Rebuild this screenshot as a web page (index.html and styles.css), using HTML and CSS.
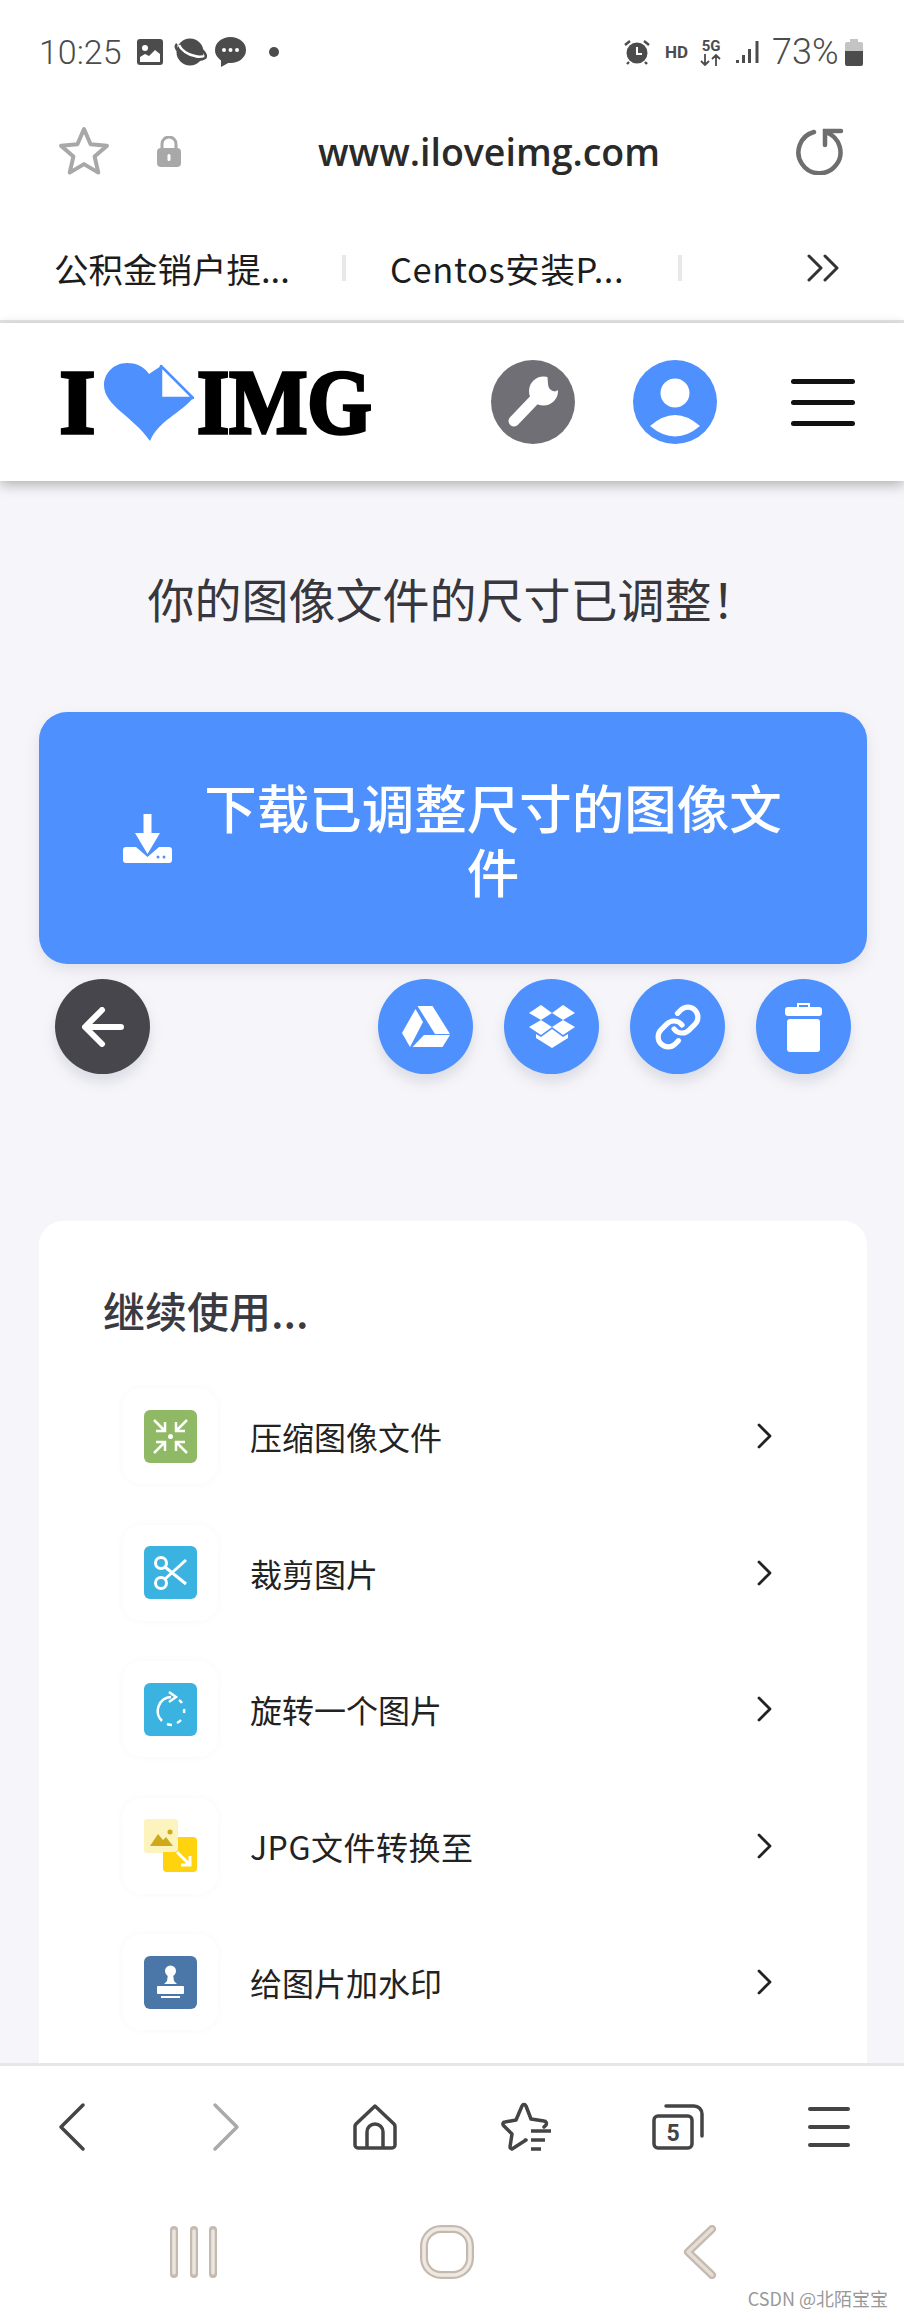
FILE: index.html
```html
<!DOCTYPE html>
<html lang="zh-CN">
<head>
<meta charset="UTF-8" />
<meta name="viewport" content="width=device-width, initial-scale=1" />
<title>iLoveIMG</title>
<link rel="stylesheet" href="styles.css">
</head>
<body>
<div class="phone">

  <div class="status">
    <span class="status-text clock">10:25</span>
    <svg class="st-image" width="26" height="26" viewBox="0 0 26 26"><rect width="26" height="26" rx="3" fill="#4c4c4c"/><circle cx="8" cy="9" r="3" fill="#fff"/><path d="M3 23v-5l5-3 4 2 6-6 5 4v8z" fill="#fff"/></svg>
    <svg class="st-planet" width="33" height="28" viewBox="0 0 33 28"><circle cx="16" cy="14" r="13.5" fill="#4c4c4c"/><path d="M3 6C0 9 3 13 9 17c8 5 18 6 22 3 2-2 0-5-3-8" fill="none" stroke="#4c4c4c" stroke-width="2.5"/><path d="M5 7c2 5 9 10 16 11 3 1 6 1 8 0" fill="none" stroke="#fff" stroke-width="2.5"/></svg>
    <svg class="st-chat" width="31" height="30" viewBox="0 0 31 30"><ellipse cx="15.5" cy="13" rx="15.5" ry="13" fill="#4c4c4c"/><path d="M6 22l0 8 9-5z" fill="#4c4c4c"/><circle cx="9" cy="13" r="2" fill="#fff"/><circle cx="15.5" cy="13" r="2" fill="#fff"/><circle cx="22" cy="13" r="2" fill="#fff"/></svg>
    <span class="st-dot"></span>

    <svg class="st-alarm" width="26" height="26" viewBox="0 0 26 26"><circle cx="13" cy="14" r="10.5" fill="#4c4c4c"/><path d="M1 6l5-4M25 6l-5-4M5 23l-2 2M21 23l2 2" stroke="#4c4c4c" stroke-width="2.4" fill="none"/><path d="M13 8v7h5" stroke="#fff" stroke-width="2" fill="none"/></svg>
    <span class="st-hd">HD</span>
    <span class="st-net">
      <span class="st-5g">5G</span>
      <svg width="22" height="12" viewBox="0 0 22 12"><path d="M5 0v11M1 7l4 4 4-4M16 12V1M12 5l4-4 4 4" stroke="#4c4c4c" stroke-width="1.8" fill="none"/></svg>
    </span>
    <svg class="st-signal" width="24" height="24" viewBox="0 0 24 24"><path d="M1.5 20v3M7.5 15v8M13.5 9v14M21 1v22" stroke="#4c4c4c" fill="none" stroke-width="3"/></svg>
    <span class="status-text st-percent">73%</span>
    <svg class="st-battery" width="18" height="27" viewBox="0 0 18 27"><path d="M5 0h8v3h3a2 2 0 0 1 2 2v7H0V5a2 2 0 0 1 2-2h3z" fill="#c4c4c4"/><path d="M0 12h18v13a2 2 0 0 1-2 2H2a2 2 0 0 1-2-2z" fill="#4c4c4c"/></svg>
  </div>

  <div class="urlbar">
    <svg class="url-star" width="52" height="50" viewBox="0 0 52 50"><path d="M26 3l6.6 15.2 16.4 1.5-12.4 10.8 3.7 16.1L26 38.100 11.700 46.600l3.700-16.100L3 19.700l16.400-1.500z" fill="none" stroke="#a8a8a8" stroke-width="4" stroke-linejoin="round"/></svg>
    <svg class="url-lock" width="24" height="31" viewBox="0 0 24 31"><path d="M5 13V8a7 7 0 0 1 14 0v5" fill="none" stroke="#a8a8a8" stroke-width="3"/><rect y="12" width="24" height="19" rx="4" fill="#a8a8a8"/><rect x="10.500" y="18" width="3" height="7" rx="1.500" fill="#fff"/></svg>
    <span class="url-text">www.iloveimg.com</span>
    <svg class="url-reload" width="48" height="48" viewBox="0 0 48 48"><path d="M18 5A21 21 0 1 0 30.500 5.500" fill="none" stroke="#6e6e6e" stroke-width="4.500" stroke-linecap="round"/><path d="M45 4H29V18" fill="none" stroke="#6e6e6e" stroke-width="4.500" stroke-linecap="round"/></svg>
  </div>

  <div class="tabs">
    <span class="tab tab-first">公积金销户提...</span>
    <span class="tab-sep"></span>
    <span class="tab tab-second">Centos安装P...</span>
    <span class="tab-sep"></span>
    <svg class="tab-more" width="34" height="28" viewBox="0 0 34 28"><path d="M3 2l12 12L3 26M19 2l12 12-12 12" fill="none" stroke="#333" stroke-width="3" stroke-linecap="round" stroke-linejoin="round"/></svg>
  </div>

  <header class="site-header">
    <div class="logo">
      <span class="logo-text logo-i">I</span>
      <svg class="logo-heart" width="90" height="80" viewBox="0 0 90 80"><path d="M45 13C40 5 31 2 23 2 9 2 0 13 0 24c0 21 29 31 46 56 8-20 31-28 43-43L57 5z" fill="#4d90fe"/><path d="M57 5v32h32z" fill="#fff" stroke="#4d90fe" stroke-width="2.500" stroke-linejoin="round"/></svg>
      <span class="logo-text logo-img">IMG</span>
    </div>
    <svg class="head-btn" width="84" height="84" viewBox="0 0 84 84"><circle cx="42" cy="42" r="42" fill="#6f6f75"/><path d="M23 61l22-23" stroke="#fff" stroke-width="11" stroke-linecap="round"/><circle cx="52.500" cy="31" r="14.500" fill="#fff"/><path d="M56 10l20 16-12 5.500q-6.500-.500-7-7.500z" fill="#6f6f75"/></svg>
    <svg class="head-btn head-user" width="84" height="84" viewBox="0 0 84 84"><circle cx="42" cy="42" r="42" fill="#4d90fe"/><circle cx="42" cy="33" r="14.500" fill="#fff"/><path d="M17 66Q42 44 67 66 42 87 17 66z" fill="#fff"/></svg>
    <div class="burger"><span></span><span></span><span></span></div>
  </header>

  <main class="content">
    <h1 class="done-title">你的图像文件的尺寸已调整！</h1>

    <a class="download-btn">
      <svg width="49" height="49" viewBox="0 0 49 49"><path d="M20.500 0h8v19H37L24.500 40 12 19h8.500z" fill="#fff"/><path d="M3 33h10l11.500 10L36 33h10a3 3 0 0 1 3 3v10a3 3 0 0 1-3 3H3a3 3 0 0 1-3-3V36a3 3 0 0 1 3-3z" fill="#fff"/><circle cx="35" cy="43" r="1.500" fill="#4d90fe"/><circle cx="41" cy="43" r="1.500" fill="#4d90fe"/></svg>
      <span class="download-label">下载已调整尺寸的图像文件</span>
    </a>

    <div class="actions">
      <span class="round-btn round-dark">
        <svg width="42" height="40" viewBox="0 0 42 40"><path d="M39 20H4M20 3L3 20l17 17" fill="none" stroke="#fff" stroke-width="6" stroke-linecap="round" stroke-linejoin="round"/></svg>
      </span>
      <div class="actions-right">
        <span class="round-btn">
          <svg width="48" height="41" viewBox="0 0 48 41"><path d="M15.500 0h15L48 28H33z" fill="#fff"/><path d="M13.500 3L21 16 8 41 0 27z" fill="#fff"/><path d="M22 29h26l-7.500 12H10.500z" fill="#fff"/></svg>
        </span>
        <span class="round-btn">
          <svg width="46" height="43" viewBox="0 0 46 43"><path d="M12 0l11 8-11 7L0 8zM34 0l12 8-12 7-11-7zM0 22l12-7 11 7-11 8zM46 22l-12-7-11 7 11 8zM23 24l11 8 5-3v4L23 43 7 33v-4l5 3z" fill="#fff"/></svg>
        </span>
        <span class="round-btn">
          <svg width="48" height="48" viewBox="0 0 24 24"><path d="M10 13a5 5 0 0 0 7.540.540l3-3a5 5 0 0 0-7.070-7.070l-1.720 1.710" fill="none" stroke="#fff" stroke-width="2.600" stroke-linecap="round"/><path d="M14 11a5 5 0 0 0-7.540-.540l-3 3a5 5 0 0 0 7.070 7.070l1.710-1.710" fill="none" stroke="#fff" stroke-width="2.600" stroke-linecap="round"/></svg>
        </span>
        <span class="round-btn">
          <svg width="37" height="50" viewBox="0 0 37 50"><path d="M13 6V2h11v4" fill="none" stroke="#fff" stroke-width="2"/><rect y="5" width="37" height="9" rx="3" fill="#fff"/><rect x="2" y="17" width="33" height="33" rx="3" fill="#fff"/></svg>
        </span>
      </div>
    </div>

    <section class="continue-card">
      <h2 class="continue-title">继续使用...</h2>
      <ul class="tool-list">
        <li class="tool-row">
          <span class="tool-tile">
            <svg width="53" height="53" viewBox="0 0 53 53"><rect width="53" height="53" rx="6" fill="#8fb964"/><path d="M10 10l11 11M21 12v9h-9M43 10L32 21M32 12v9h9M10 43l11-11M21 41v-9h-9M43 43L32 32M32 41v-9h9" fill="none" stroke="#fff" stroke-width="2.500"/><circle cx="26.500" cy="26.500" r="2.500" fill="#fff"/></svg>
          </span>
          <span class="tool-name">压缩图像文件</span>
          <svg class="tool-arrow" width="18" height="28" viewBox="0 0 18 28"><path d="M3 3l11 11L3 25" fill="none" stroke="#222" stroke-width="2.800" stroke-linecap="round" stroke-linejoin="round"/></svg>
        </li>
        <li class="tool-row">
          <span class="tool-tile">
            <svg width="53" height="53" viewBox="0 0 53 53"><rect width="53" height="53" rx="6" fill="#3bb3e0"/><circle cx="17" cy="17" r="5.500" fill="none" stroke="#fff" stroke-width="3"/><circle cx="17" cy="37" r="5.500" fill="none" stroke="#fff" stroke-width="3"/><path d="M21 21l21 17M21 33l21-19" fill="none" stroke="#fff" stroke-width="3"/></svg>
          </span>
          <span class="tool-name">裁剪图片</span>
          <svg class="tool-arrow" width="18" height="28" viewBox="0 0 18 28"><path d="M3 3l11 11L3 25" fill="none" stroke="#222" stroke-width="2.800" stroke-linecap="round" stroke-linejoin="round"/></svg>
        </li>
        <li class="tool-row">
          <span class="tool-tile">
            <svg width="53" height="53" viewBox="0 0 53 53"><rect width="53" height="53" rx="6" fill="#3bb3e0"/><path d="M27 14A14 14 0 0 0 18 38" fill="none" stroke="#fff" stroke-width="2.500"/><path d="M23 41a14 14 0 0 0 5 1M33 40a14 14 0 0 0 4-3M40 30a14 14 0 0 0 0-4M38 20a14 14 0 0 0-3-3" fill="none" stroke="#fff" stroke-width="2.500"/><path d="M25 9l7 5-7 5" fill="none" stroke="#fff" stroke-width="2.500"/></svg>
          </span>
          <span class="tool-name">旋转一个图片</span>
          <svg class="tool-arrow" width="18" height="28" viewBox="0 0 18 28"><path d="M3 3l11 11L3 25" fill="none" stroke="#222" stroke-width="2.800" stroke-linecap="round" stroke-linejoin="round"/></svg>
        </li>
        <li class="tool-row">
          <span class="tool-tile">
            <svg width="53" height="53" viewBox="0 0 53 53"><rect width="34" height="34" rx="3" fill="#fdf3bd"/><rect x="19" y="18" width="34" height="35" rx="4" fill="#ffd30e"/><path d="M19 18h15v11a4 4 0 0 1-4 4H19z" fill="#fdf3bd"/><path d="M6 27l8-12 5 6 3-3 7 9z" fill="#cfa919"/><circle cx="26" cy="13" r="2.500" fill="#cfa919"/><path d="M33 33l13 13M46 37v9h-9" fill="none" stroke="#fff" stroke-width="3"/></svg>
          </span>
          <span class="tool-name tool-name-latin">JPG文件转换至</span>
          <svg class="tool-arrow" width="18" height="28" viewBox="0 0 18 28"><path d="M3 3l11 11L3 25" fill="none" stroke="#222" stroke-width="2.800" stroke-linecap="round" stroke-linejoin="round"/></svg>
        </li>
        <li class="tool-row">
          <span class="tool-tile">
            <svg width="53" height="53" viewBox="0 0 53 53"><rect width="53" height="53" rx="6" fill="#4a76a8"/><circle cx="26.500" cy="15" r="5.500" fill="#fff"/><path d="M24 18h5l1 7 3 3H20l3-3z" fill="#fff"/><rect x="13" y="30" width="27" height="8" rx="1" fill="#fff"/><rect x="17" y="40" width="19" height="2" fill="#fff"/></svg>
          </span>
          <span class="tool-name">给图片加水印</span>
          <svg class="tool-arrow" width="18" height="28" viewBox="0 0 18 28"><path d="M3 3l11 11L3 25" fill="none" stroke="#222" stroke-width="2.800" stroke-linecap="round" stroke-linejoin="round"/></svg>
        </li>
      </ul>
    </section>
  </main>

  <nav class="toolbar">
    <svg class="nav-back" width="30" height="50" viewBox="0 0 30 50"><path d="M26 3L4 25l22 22" fill="none" stroke="#444" stroke-width="3.500" stroke-linecap="round" stroke-linejoin="round"/></svg>
    <svg width="30" height="50" viewBox="0 0 30 50"><path d="M4 3l22 22L4 47" fill="none" stroke="#aaa" stroke-width="3.500" stroke-linecap="round" stroke-linejoin="round"/></svg>
    <svg class="nav-home" width="46" height="46" viewBox="0 0 46 46"><path d="M23 2L4 20a4 4 0 0 0-1 3v18a3 3 0 0 0 3 3h34a3 3 0 0 0 3-3V23a4 4 0 0 0-1-3z" fill="none" stroke="#444" stroke-width="3.500" stroke-linejoin="round"/><path d="M15 44V28a8 8 0 0 1 16 0v16" fill="none" stroke="#444" stroke-width="3.500"/></svg>
    <svg width="52" height="50" viewBox="0 0 52 50"><path d="M11 47l14-9-1-0M11 47c-1 0-2-1-2-2l2-13-8-8c-2-2-1-4 1-4l11-2 6-14c1-2 3-2 4 0l5 13 13 2c2 0 3 2 2 4l-2 2" fill="none" stroke="#444" stroke-width="3.500" stroke-linecap="round" stroke-linejoin="round"/><path d="M30 29h20M30 38h14M30 47h10" stroke="#444" stroke-width="3.500" fill="none"/></svg>
    <span class="tabs-count">
      <svg width="52" height="46" viewBox="0 0 52 46"><rect x="2" y="12" width="38" height="32" rx="4" fill="none" stroke="#444" stroke-width="3.500"/><path d="M14 2h28a8 8 0 0 1 8 8v22" fill="none" stroke="#444" stroke-width="3.500" stroke-linecap="round"/><text x="21" y="37" class="tabs-num">5</text></svg>
    </span>
    <div class="nav-menu"><span></span><span></span><span></span></div>
  </nav>

  <div class="sysnav">
    <svg width="48" height="52" viewBox="0 0 48 52"><g fill="none" stroke-linecap="round"><path d="M4 4v44M24 4v44M43 4v44" stroke="#c4bab0" stroke-width="8"/><path d="M4 5v42M24 5v42M43 5v42" stroke="#ece6df" stroke-width="3.500"/></g></svg>
    <svg width="56" height="56" viewBox="0 0 56 56"><rect x="5" y="5" width="46" height="46" rx="17" fill="none" stroke="#c4bab0" stroke-width="8"/><rect x="5" y="5" width="46" height="46" rx="17" fill="none" stroke="#efe9e2" stroke-width="3.500"/></svg>
    <svg width="34" height="54" viewBox="0 0 34 54"><path d="M29 4L5 27l24 23" fill="none" stroke="#c4bab0" stroke-width="8" stroke-linecap="round" stroke-linejoin="round"/><path d="M29 4L5 27l24 23" fill="none" stroke="#e6ded5" stroke-width="3.500" stroke-linecap="round" stroke-linejoin="round"/></svg>
  </div>

  <span class="watermark">CSDN @北陌宝宝</span>
</div>
</body>
</html>
```

FILE: styles.css
```css
* {
  box-sizing: border-box;
}
body {
  margin: 0;
  background: #fff;
  font-family: "Noto Sans CJK SC", "Noto Sans", sans-serif;
}
.phone {
  width: 904px;
  height: 2316px;
  display: flex;
  flex-direction: column;
  overflow: hidden;
  position: relative;
  background: #fff;
}

/* status bar */
.status {
  height: 104px;
  flex: none;
  display: flex;
  align-items: center;
  padding-left: 39px;
}
.status-text {
  font-family: Roboto, sans-serif;
  font-weight: 300;
  font-size: 34px;
  color: #4c4c4c;
  line-height: 1;
}
.clock {
  width: 98px;
}
.st-planet {
  margin-left: 11px;
}
.st-chat {
  margin-left: 8px;
}
.st-dot {
  width: 10px;
  height: 10px;
  border-radius: 50%;
  background: #4c4c4c;
  margin-left: 23px;
}
.st-alarm {
  margin-left: 345px;
}
.st-hd {
  font-family: Roboto, sans-serif;
  font-weight: 700;
  font-size: 17px;
  color: #4c4c4c;
  margin-left: 15px;
}
.st-net {
  display: flex;
  flex-direction: column;
  align-items: center;
  margin-left: 12px;
  width: 22px;
}
.st-5g {
  font-family: Roboto, sans-serif;
  font-weight: 700;
  font-size: 15px;
  line-height: 15px;
  color: #4c4c4c;
}
.st-signal {
  margin-left: 14px;
}
.st-percent {
  margin-left: 12px;
  font-size: 36px;
  width: 72px;
}
.st-battery {
  margin-left: 1px;
}

/* address bar */
.urlbar {
  height: 94px;
  flex: none;
  display: flex;
  align-items: center;
  padding-left: 58px;
}
.url-lock {
  margin-left: 47px;
}
.url-text {
  font-family: "Open Sans", sans-serif;
  font-weight: 600;
  font-size: 37.500px;
  color: #2a2a2a;
  width: 341px;
  margin-left: 137px;
  white-space: nowrap;
}
.url-reload {
  margin-left: 137px;
}

/* open tabs */
.tabs {
  height: 125px;
  flex: none;
  display: flex;
  align-items: center;
  padding: 18px 0 0 54px;
  border-bottom: 3px solid #e6e6e6;
}
.tab {
  font-size: 34.500px;
  color: #1c1c1c;
  white-space: nowrap;
}
.tab-first {
  width: 288px;
}
.tab-second {
  width: 288px;
  margin-left: 44px;
  letter-spacing: 0.6px;
}
.tab-sep {
  width: 4px;
  height: 26px;
  background: #e8e8e8;
}
.tab-more {
  margin-left: 124px;
}

/* site header */
.site-header {
  height: 158px;
  flex: none;
  display: flex;
  align-items: center;
  background: #fff;
  box-shadow: 0 4px 12px rgba(0, 0, 0, 0.28);
  position: relative;
  z-index: 1;
}
.logo {
  display: flex;
  align-items: center;
  margin-left: 63px;
  width: 428px;
}
.logo-text {
  font-family: "Liberation Serif", serif;
  font-weight: 700;
  font-size: 92px;
  line-height: 80px;
  color: #000;
  -webkit-text-stroke: 3.5px #000;
}
.logo-i {
  width: 29px;
  display: flex;
  justify-content: center;
}
.logo-heart {
  margin-left: 12px;
  margin-top: -2px;
  flex: none;
}
.logo-img {
  margin-left: 3px;
  width: 174px;
  transform: scaleX(0.9);
  transform-origin: left center;
  white-space: nowrap;
}
.head-user {
  margin-left: 58px;
}
.burger {
  display: flex;
  flex-direction: column;
  gap: 16px;
  width: 64px;
  margin-left: 74px;
}
.burger span {
  height: 5px;
  border-radius: 3px;
  background: #111;
}

/* main page */
.content {
  flex: 1;
  min-height: 0;
  overflow: hidden;
  background: #f6f6fa;
  padding: 87px 37px 0 39px;
}
.done-title {
  margin: 0 0 84px;
  font-size: 47px;
  font-weight: 400;
  line-height: 60px;
  color: #37373d;
  text-align: center;
  white-space: nowrap;
}
.download-btn {
  height: 252px;
  display: flex;
  align-items: center;
  gap: 25px;
  padding-left: 84px;
  background: #4d90fe;
  border-radius: 28px;
  box-shadow: 0 6px 16px rgba(60, 60, 100, 0.12);
}
.download-btn svg {
  flex: none;
}
.download-label {
  width: 592px;
  font-size: 52.500px;
  font-weight: 500;
  line-height: 64px;
  color: #fff;
  text-align: center;
}
.actions {
  display: flex;
  justify-content: space-between;
  margin: 15px 16px 0;
}
.actions-right {
  display: flex;
  gap: 31px;
}
.round-btn {
  width: 95px;
  height: 95px;
  border-radius: 50%;
  background: #4d90fe;
  display: flex;
  align-items: center;
  justify-content: center;
  box-shadow: 0 8px 14px rgba(60, 60, 100, 0.14);
}
.round-dark {
  background: #47464c;
}

/* continue card */
.continue-card {
  margin-top: 147px;
  height: 1000px;
  background: #fff;
  border-radius: 24px;
  padding: 58px 93px 0 64px;
}
.continue-title {
  margin: 0 0 27px;
  font-size: 42px;
  font-weight: 500;
  line-height: 62px;
  color: #3a3a42;
}
.tool-list {
  list-style: none;
  margin: 0 0 0 19px;
  padding: 0;
}
.tool-row {
  height: 136.5px;
  display: flex;
  align-items: center;
}
.tool-tile {
  width: 96px;
  height: 96px;
  flex: none;
  display: flex;
  align-items: center;
  justify-content: center;
  border-radius: 20px;
  background: #fff;
  box-shadow: 0 0 10px rgba(60, 60, 100, 0.03);
}
.tool-name {
  margin-left: 32px;
  font-size: 32px;
  color: #222;
}
.tool-name-latin {
  letter-spacing: 0.5px;
}
.tool-arrow {
  margin-left: auto;
}

/* browser toolbar */
.toolbar {
  height: 125px;
  flex: none;
  display: grid;
  grid-template-columns: repeat(6, 1fr);
  align-items: center;
  justify-items: center;
  background: #fff;
  border-top: 3px solid #e6e6e6;
}
.nav-back {
  margin-right: 6px;
}
.nav-home {
  margin-right: 4px;
}
.tabs-count {
  display: flex;
}
.tabs-num {
  font-family: Roboto, sans-serif;
  font-weight: 700;
  font-size: 23px;
  text-anchor: middle;
  fill: #444;
}
.nav-menu {
  width: 42px;
  display: flex;
  flex-direction: column;
  gap: 13.500px;
}
.nav-menu span {
  height: 4.500px;
  border-radius: 3px;
  background: #444;
}

/* android nav */
.sysnav {
  height: 128px;
  flex: none;
  display: grid;
  grid-template-columns: repeat(3, 253px);
  justify-content: center;
  justify-items: center;
  align-items: center;
  padding-right: 10px;
}
.watermark {
  position: absolute;
  right: 16px;
  bottom: 5px;
  font-size: 18px;
  color: #999;
  white-space: nowrap;
}
```
